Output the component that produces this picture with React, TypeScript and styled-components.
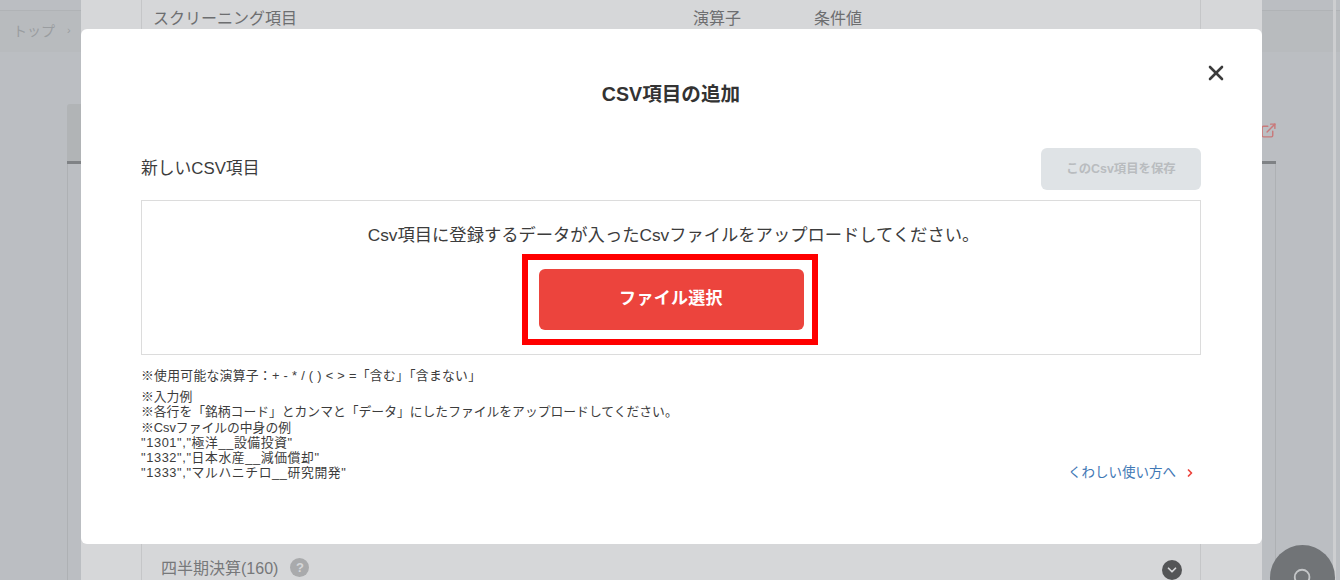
import React from 'react'
import styled, { createGlobalStyle } from 'styled-components'
import { X, Search, ChevronDown, ChevronRight, ExternalLink } from 'lucide-react'

const GlobalStyle = createGlobalStyle`
  html, body {
    margin: 0;
    padding: 0;
    background: #bbbec2;
    font-family: "Liberation Sans", "Noto Sans CJK JP", sans-serif;
  }
`

const Page = styled.div`
  position: relative;
  width: 1340px;
  height: 580px;
  overflow: hidden;
  background: #bbbec2;
`

/* page behind the two dialogs */
const Breadcrumb = styled.div`
  margin-top: 10px;
  height: 42px;
  box-sizing: border-box;
  border-top: 1px solid #b0b3b6;
  background: #b8bbbe;
  padding: 0 0 3px 13px;
  display: flex;
  align-items: center;
  gap: 12px;
  font-size: 14px;
  color: #9a9da0;
`

const Crumb = styled.span`
  font-size: 11px;
`

const BackPanel = styled.div`
  margin: 52px 0 0 67px;
  width: 1209px;
`

const BackHead = styled.div`
  height: 57px;
  border-bottom: 3px solid #7f8285;
  border-radius: 3px 3px 0 0;
  background: linear-gradient(to right, #b1b4b6 14px, #bbbec2 14px);
  display: flex;
  align-items: flex-start;
  justify-content: flex-end;
  color: #c9797a;
`

const LinkIcon = styled.span`
  margin: 18px -1px 0 0;
  display: flex;
`

const BackBody = styled.div`
  height: 420px;
  border: 1px solid #aeb1b4;
  border-top: 0;
`

const ScrollStripe = styled.div`
  position: absolute;
  top: 0;
  bottom: 0;
  left: 1333px;
  width: 3px;
  background: #cdced0;
`

/* dialog underneath */
const Sheet = styled.div`
  position: absolute;
  top: 0;
  bottom: 0;
  left: 81px;
  width: 1181px;
  padding-left: 60px;
  box-sizing: border-box;
  background: #d6d7d9;
  display: flex;
`

const SheetColumn = styled.div`
  width: 1060px;
  box-sizing: border-box;
  border-left: 1px solid #c5c6c8;
  border-right: 1px solid #c5c6c8;
  display: flex;
  flex-direction: column;
  justify-content: space-between;
`

const SheetHead = styled.div`
  display: grid;
  grid-template-columns: 540px 121px 1fr;
  padding: 9px 0 0 11px;
  font-size: 16px;
  line-height: 20px;
  color: #6d6e70;
`

const SheetFoot = styled.div`
  height: 36px;
  box-sizing: border-box;
  padding: 15px 18px 0 19px;
  display: flex;
  align-items: flex-start;
  font-size: 16px;
  line-height: 20px;
  color: #77787a;
`

const Hint = styled.span`
  width: 19px;
  height: 19px;
  margin: -1px 0 0 12px;
  border-radius: 50%;
  background: #a9aaac;
  color: #d6d7d9;
  font-size: 13px;
  font-weight: bold;
  line-height: 19px;
  text-align: center;
`

const Toggle = styled.span`
  width: 20px;
  height: 20px;
  margin: 1px 0 0 auto;
  border-radius: 50%;
  background: #545557;
  color: #d6d7d9;
  display: flex;
  align-items: center;
  justify-content: center;
`

const Fab = styled.div`
  position: absolute;
  left: 1270px;
  top: 545px;
  width: 65px;
  height: 65px;
  border-radius: 50%;
  background: #717477;
  color: #c4c6c8;
  display: flex;
  align-items: center;
  justify-content: center;
`

/* front dialog */
const Modal = styled.div`
  position: absolute;
  left: 81px;
  top: 29px;
  width: 1181px;
  height: 515px;
  box-sizing: border-box;
  padding: 0 61px 0 60px;
  background: #fff;
  border-radius: 6px;
  color: #333;
`

const CloseButton = styled.button`
  position: absolute;
  right: 34px;
  top: 32px;
  padding: 0;
  border: 0;
  background: none;
  color: #3c3c3c;
  display: flex;
`

const Title = styled.h2`
  margin: 0;
  padding-top: 52px;
  font-size: 19.6px;
  line-height: 26px;
  font-weight: bold;
  text-align: center;
  color: #333;
`

const NewRow = styled.div`
  margin-top: 41px;
  height: 42px;
  display: flex;
  align-items: center;
  justify-content: space-between;
`

const NewLabel = styled.div`
  padding-bottom: 4px;
  font-size: 16.8px;
  color: #3c3c3c;
`

const SaveButton = styled.button`
  width: 160px;
  height: 42px;
  padding: 0 0 3px;
  border: 0;
  border-radius: 6px;
  background: #dfe3e6;
  color: #b9bcbf;
  font-family: inherit;
  font-size: 12.4px;
  font-weight: bold;
`

const DropBox = styled.div`
  margin-top: 10px;
  height: 155px;
  box-sizing: border-box;
  border: 1px solid #dcdcdc;
  padding-top: 23px;
  display: flex;
  flex-direction: column;
  align-items: center;
`

const DropText = styled.div`
  padding-left: 5px;
  font-size: 17.3px;
  line-height: 22px;
  color: #3c3c3c;
`

const Highlight = styled.div`
  margin: 8px 3px 0 0;
  width: 296px;
  height: 91px;
  box-sizing: border-box;
  border: 6px solid #ff0000;
  padding-left: 3px;
  display: flex;
  align-items: center;
  justify-content: center;
`

const PickButton = styled.button`
  width: 265px;
  height: 61px;
  padding: 0 0 7px;
  border: 0;
  border-radius: 6px;
  background: #ec443d;
  color: #fff;
  font-family: inherit;
  font-size: 17px;
  font-weight: bold;
  letter-spacing: 0.3px;
`

const NotesRow = styled.div`
  margin-top: 13px;
  display: flex;
  justify-content: space-between;
  align-items: flex-end;
`

const Notes = styled.div`
  font-size: 12.8px;
  line-height: 15.2px;
  color: #3c3c3c;
`

const NoteLead = styled.div`
  margin-bottom: 6px;
  letter-spacing: 0.3px;
`

const NoteLine = styled.div<{ $sample: boolean }>`
  letter-spacing: ${(p) => (p.$sample ? '0.62px' : '0')};
`

const HelpLink = styled.a`
  margin-right: 5px;
  display: flex;
  align-items: center;
  gap: 8px;
  font-size: 13.5px;
  line-height: 15px;
  color: #3f78b5;
`

const Chevron = styled.span`
  color: #ec443d;
  display: flex;
`

const csvLines = [
  '※入力例',
  '※各行を「銘柄コード」とカンマと「データ」にしたファイルをアップロードしてください。',
  '※Csvファイルの中身の例',
  '"1301","極洋__設備投資"',
  '"1332","日本水産__減価償却"',
  '"1333","マルハニチロ__研究開発"',
]

export default function App() {
  return (
    <Page>
      <GlobalStyle />
      <Breadcrumb>
        トップ <Crumb>›</Crumb>
      </Breadcrumb>
      <BackPanel>
        <BackHead>
          <LinkIcon>
            <ExternalLink size={17} strokeWidth={2} />
          </LinkIcon>
        </BackHead>
        <BackBody />
      </BackPanel>
      <ScrollStripe />

      <Sheet>
        <SheetColumn>
          <SheetHead>
            <span>スクリーニング項目</span>
            <span>演算子</span>
            <span>条件値</span>
          </SheetHead>
          <SheetFoot>
            四半期決算(160)
            <Hint>?</Hint>
            <Toggle>
              <ChevronDown size={14} strokeWidth={3} />
            </Toggle>
          </SheetFoot>
        </SheetColumn>
      </Sheet>
      <Fab>
        <Search size={22} strokeWidth={2} />
      </Fab>

      <Modal>
        <CloseButton>
          <X size={24} strokeWidth={2.6} />
        </CloseButton>
        <Title>CSV項目の追加</Title>
        <NewRow>
          <NewLabel>新しいCSV項目</NewLabel>
          <SaveButton>このCsv項目を保存</SaveButton>
        </NewRow>
        <DropBox>
          <DropText>Csv項目に登録するデータが入ったCsvファイルをアップロードしてください。</DropText>
          <Highlight>
            <PickButton>ファイル選択</PickButton>
          </Highlight>
        </DropBox>
        <NotesRow>
          <Notes>
            <NoteLead>※使用可能な演算子：+ - * / ( ) &lt; &gt; =「含む」「含まない」</NoteLead>
            {csvLines.map((line) => (
              <NoteLine key={line} $sample={line.startsWith('"')}>
                {line}
              </NoteLine>
            ))}
          </Notes>
          <HelpLink>
            くわしい使い方へ
            <Chevron>
              <ChevronRight size={12} strokeWidth={3.5} />
            </Chevron>
          </HelpLink>
        </NotesRow>
      </Modal>
    </Page>
  )
}
